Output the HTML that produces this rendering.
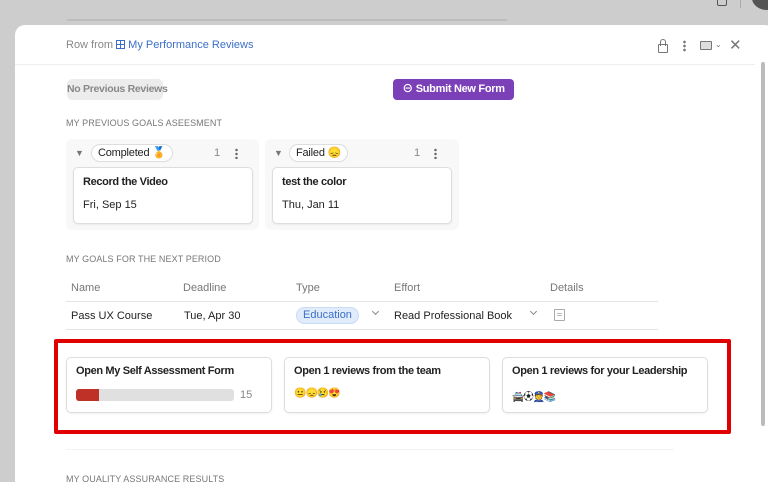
<!DOCTYPE html>
<html><head><meta charset="utf-8"><style>
*{box-sizing:border-box;margin:0;padding:0}
html,body{width:768px;height:482px;overflow:hidden}
body{background:#cdcdcd;font-family:"Liberation Sans","Noto Sans CJK JP",sans-serif;position:relative;color:#222}
.a{position:absolute;white-space:nowrap}
.modal{left:15px;top:25px;width:760px;height:470px;background:#fff;border-radius:10px}
.sec{font-size:9px;color:#777;letter-spacing:.1px}
.card{background:#fff;border:1px solid #ddd;border-radius:5px;box-shadow:0 1px 2px rgba(0,0,0,.06)}
.t{font-size:11px;font-weight:bold;color:#222;letter-spacing:-.35px}
</style></head><body>
<div class="a" style="left:67px;top:19px;width:440px;height:2px;background:#bdbdbd"></div>
<div class="a" style="left:717px;top:-4px;width:10px;height:10px;border:1.5px solid #555;border-radius:2px"></div>
<div class="a" style="left:740px;top:-2px;width:1px;height:10px;background:#aaa"></div>
<div class="a" style="left:752px;top:-14px;width:30px;height:24px;border-radius:50%;background:#555"></div>
<div class="a modal"></div>
<div class="a" style="left:15px;top:64px;width:740px;height:1px;background:#eee"></div>
<div class="a" style="left:761px;top:62px;width:4px;height:364px;background:#bbb;border-radius:2px"></div>
<div class="a" style="left:66px;top:39px;font-size:11px;color:#888">Row from <span style="color:#3b6fc7"><span style="display:inline-block;width:9px;height:9px;border:1.5px solid #3b6fc7;background:linear-gradient(#3b6fc7,#3b6fc7) 3px 0/1px 100% no-repeat,linear-gradient(#3b6fc7,#3b6fc7) 0 3px/100% 1px no-repeat;vertical-align:-1px"></span> My Performance Reviews</span></div>
<div class="a" style="left:658px;top:44px;width:10px;height:9px;border:1.5px solid #777;border-radius:1px"></div>
<div class="a" style="left:660px;top:39px;width:6px;height:7px;border:1.5px solid #777;border-bottom:none;border-radius:3px 3px 0 0"></div>
<div class="a" style="left:683px;top:40px;width:3px;height:12px;background:radial-gradient(circle,#777 1.2px,transparent 1.5px) 0 0/3px 4px"></div>
<div class="a" style="left:700px;top:41px;width:12px;height:9px;border:1.5px solid #777;border-radius:1px;background:#ddd"></div>
<div class="a" style="left:715px;top:40px;font-size:8px;color:#777">⌄</div>
<div class="a" style="left:729px;top:36px;font-size:15px;color:#777">✕</div>
<div class="a" style="left:67px;top:79px;width:96px;height:21px;background:#ececec;border-radius:5px;font-size:10.5px;font-weight:bold;color:#888;text-align:center;line-height:21px;letter-spacing:-.3px">No Previous Reviews</div>
<div class="a" style="left:393px;top:79px;width:121px;height:21px;background:#7b3fb8;border-radius:4px;font-size:11px;font-weight:bold;color:#fff;text-align:center;line-height:21px;letter-spacing:-.3px">⊖ Submit New Form</div>
<div class="a sec" style="left:66px;top:118px">MY PREVIOUS GOALS ASEESMENT</div>
<div class="a" style="left:66px;top:139px;width:193px;height:91px;background:#f8f8f8;border-radius:6px"></div>
<div class="a" style="left:265px;top:139px;width:194px;height:91px;background:#f8f8f8;border-radius:6px"></div>
<div class="a" style="left:75px;top:148px;font-size:9px;color:#777">▼</div>
<div class="a" style="left:91px;top:144px;height:18px;padding:0 6px;border:1px solid #ddd;border-radius:9px;background:#fff;font-size:11px;line-height:16px;letter-spacing:-.2px">Completed 🏅</div>
<div class="a" style="left:214px;top:147px;font-size:11px;color:#888">1</div>
<div class="a" style="left:235px;top:148px;width:3px;height:11px;background:radial-gradient(circle,#666 1.1px,transparent 1.4px) 0 0/3px 4px"></div>
<div class="a card" style="left:73px;top:167px;width:180px;height:57px"></div>
<div class="a t" style="left:83px;top:176px">Record the Video</div>
<div class="a" style="left:83px;top:199px;font-size:11px">Fri, Sep 15</div>
<div class="a" style="left:274px;top:148px;font-size:9px;color:#777">▼</div>
<div class="a" style="left:289px;top:144px;height:18px;padding:0 6px;border:1px solid #ddd;border-radius:9px;background:#fff;font-size:11px;line-height:16px;letter-spacing:-.2px">Failed 😞</div>
<div class="a" style="left:414px;top:147px;font-size:11px;color:#888">1</div>
<div class="a" style="left:434px;top:148px;width:3px;height:11px;background:radial-gradient(circle,#666 1.1px,transparent 1.4px) 0 0/3px 4px"></div>
<div class="a card" style="left:272px;top:167px;width:180px;height:57px"></div>
<div class="a t" style="left:282px;top:176px">test the color</div>
<div class="a" style="left:282px;top:199px;font-size:11px">Thu, Jan 11</div>
<div class="a sec" style="left:66px;top:254px">MY GOALS FOR THE NEXT PERIOD</div>
<div class="a" style="top:282px;left:71px;font-size:11px;color:#777">Name</div>
<div class="a" style="top:282px;left:183px;font-size:11px;color:#777">Deadline</div>
<div class="a" style="top:282px;left:296px;font-size:11px;color:#777">Type</div>
<div class="a" style="top:282px;left:394px;font-size:11px;color:#777">Effort</div>
<div class="a" style="top:282px;left:550px;font-size:11px;color:#777">Details</div>
<div class="a" style="left:66px;top:301px;width:592px;height:1px;background:#e5e5e5"></div>
<div class="a" style="left:66px;top:329px;width:592px;height:1px;background:#e5e5e5"></div>
<div class="a" style="top:310px;left:71px;font-size:11px">Pass UX Course</div>
<div class="a" style="top:310px;left:184px;font-size:11px">Tue, Apr 30</div>
<div class="a" style="top:307px;left:296px;height:17px;padding:0 6px;background:#e1ecfb;border:1px solid #c9dbf5;border-radius:9px;font-size:11px;line-height:15px;color:#3b6fc7">Education</div>
<div class="a" style="top:309px;left:373px;width:5px;height:5px;border-right:1px solid #888;border-bottom:1px solid #888;transform:rotate(45deg)"></div>
<div class="a" style="top:310px;left:394px;font-size:11px">Read Professional Book</div>
<div class="a" style="top:309px;left:531px;width:5px;height:5px;border-right:1px solid #888;border-bottom:1px solid #888;transform:rotate(45deg)"></div>
<div class="a" style="top:309px;left:554px;width:11px;height:12px;border:1px solid #aaa;border-radius:1px;background:linear-gradient(#bbb,#bbb) 2px 3px/5px 1px no-repeat,linear-gradient(#bbb,#bbb) 2px 5px/5px 1px no-repeat"></div>
<div class="a" style="left:54px;top:339px;width:677px;height:95px;border:4px solid #e00000;border-radius:2px"></div>
<div class="a card" style="left:66px;top:357px;width:206px;height:56px"></div>
<div class="a t" style="left:76px;top:365px">Open My Self Assessment Form</div>
<div class="a" style="left:76px;top:389px;width:158px;height:12px;background:#e0e0e0;border-radius:3px;overflow:hidden"><div style="width:23px;height:12px;background:#bf3127"></div></div>
<div class="a" style="left:240px;top:389px;font-size:11px;color:#888">15</div>
<div class="a card" style="left:284px;top:357px;width:206px;height:56px"></div>
<div class="a t" style="left:294px;top:365px">Open 1 reviews from the team</div>
<div class="a" style="left:294px;top:388px;font-size:10px;letter-spacing:-1px">😐😞😢😍</div>
<div class="a card" style="left:502px;top:357px;width:206px;height:56px"></div>
<div class="a t" style="left:512px;top:365px">Open 1 reviews for your Leadership</div>
<div class="a" style="left:512px;top:388px;font-size:10px;letter-spacing:-1px">🚔⚽👮📚</div>
<div class="a" style="left:66px;top:449px;width:608px;height:1px;background:#f2f2f2"></div>
<div class="a sec" style="left:66px;top:474px">MY QUALITY ASSURANCE RESULTS</div>
</body></html>
